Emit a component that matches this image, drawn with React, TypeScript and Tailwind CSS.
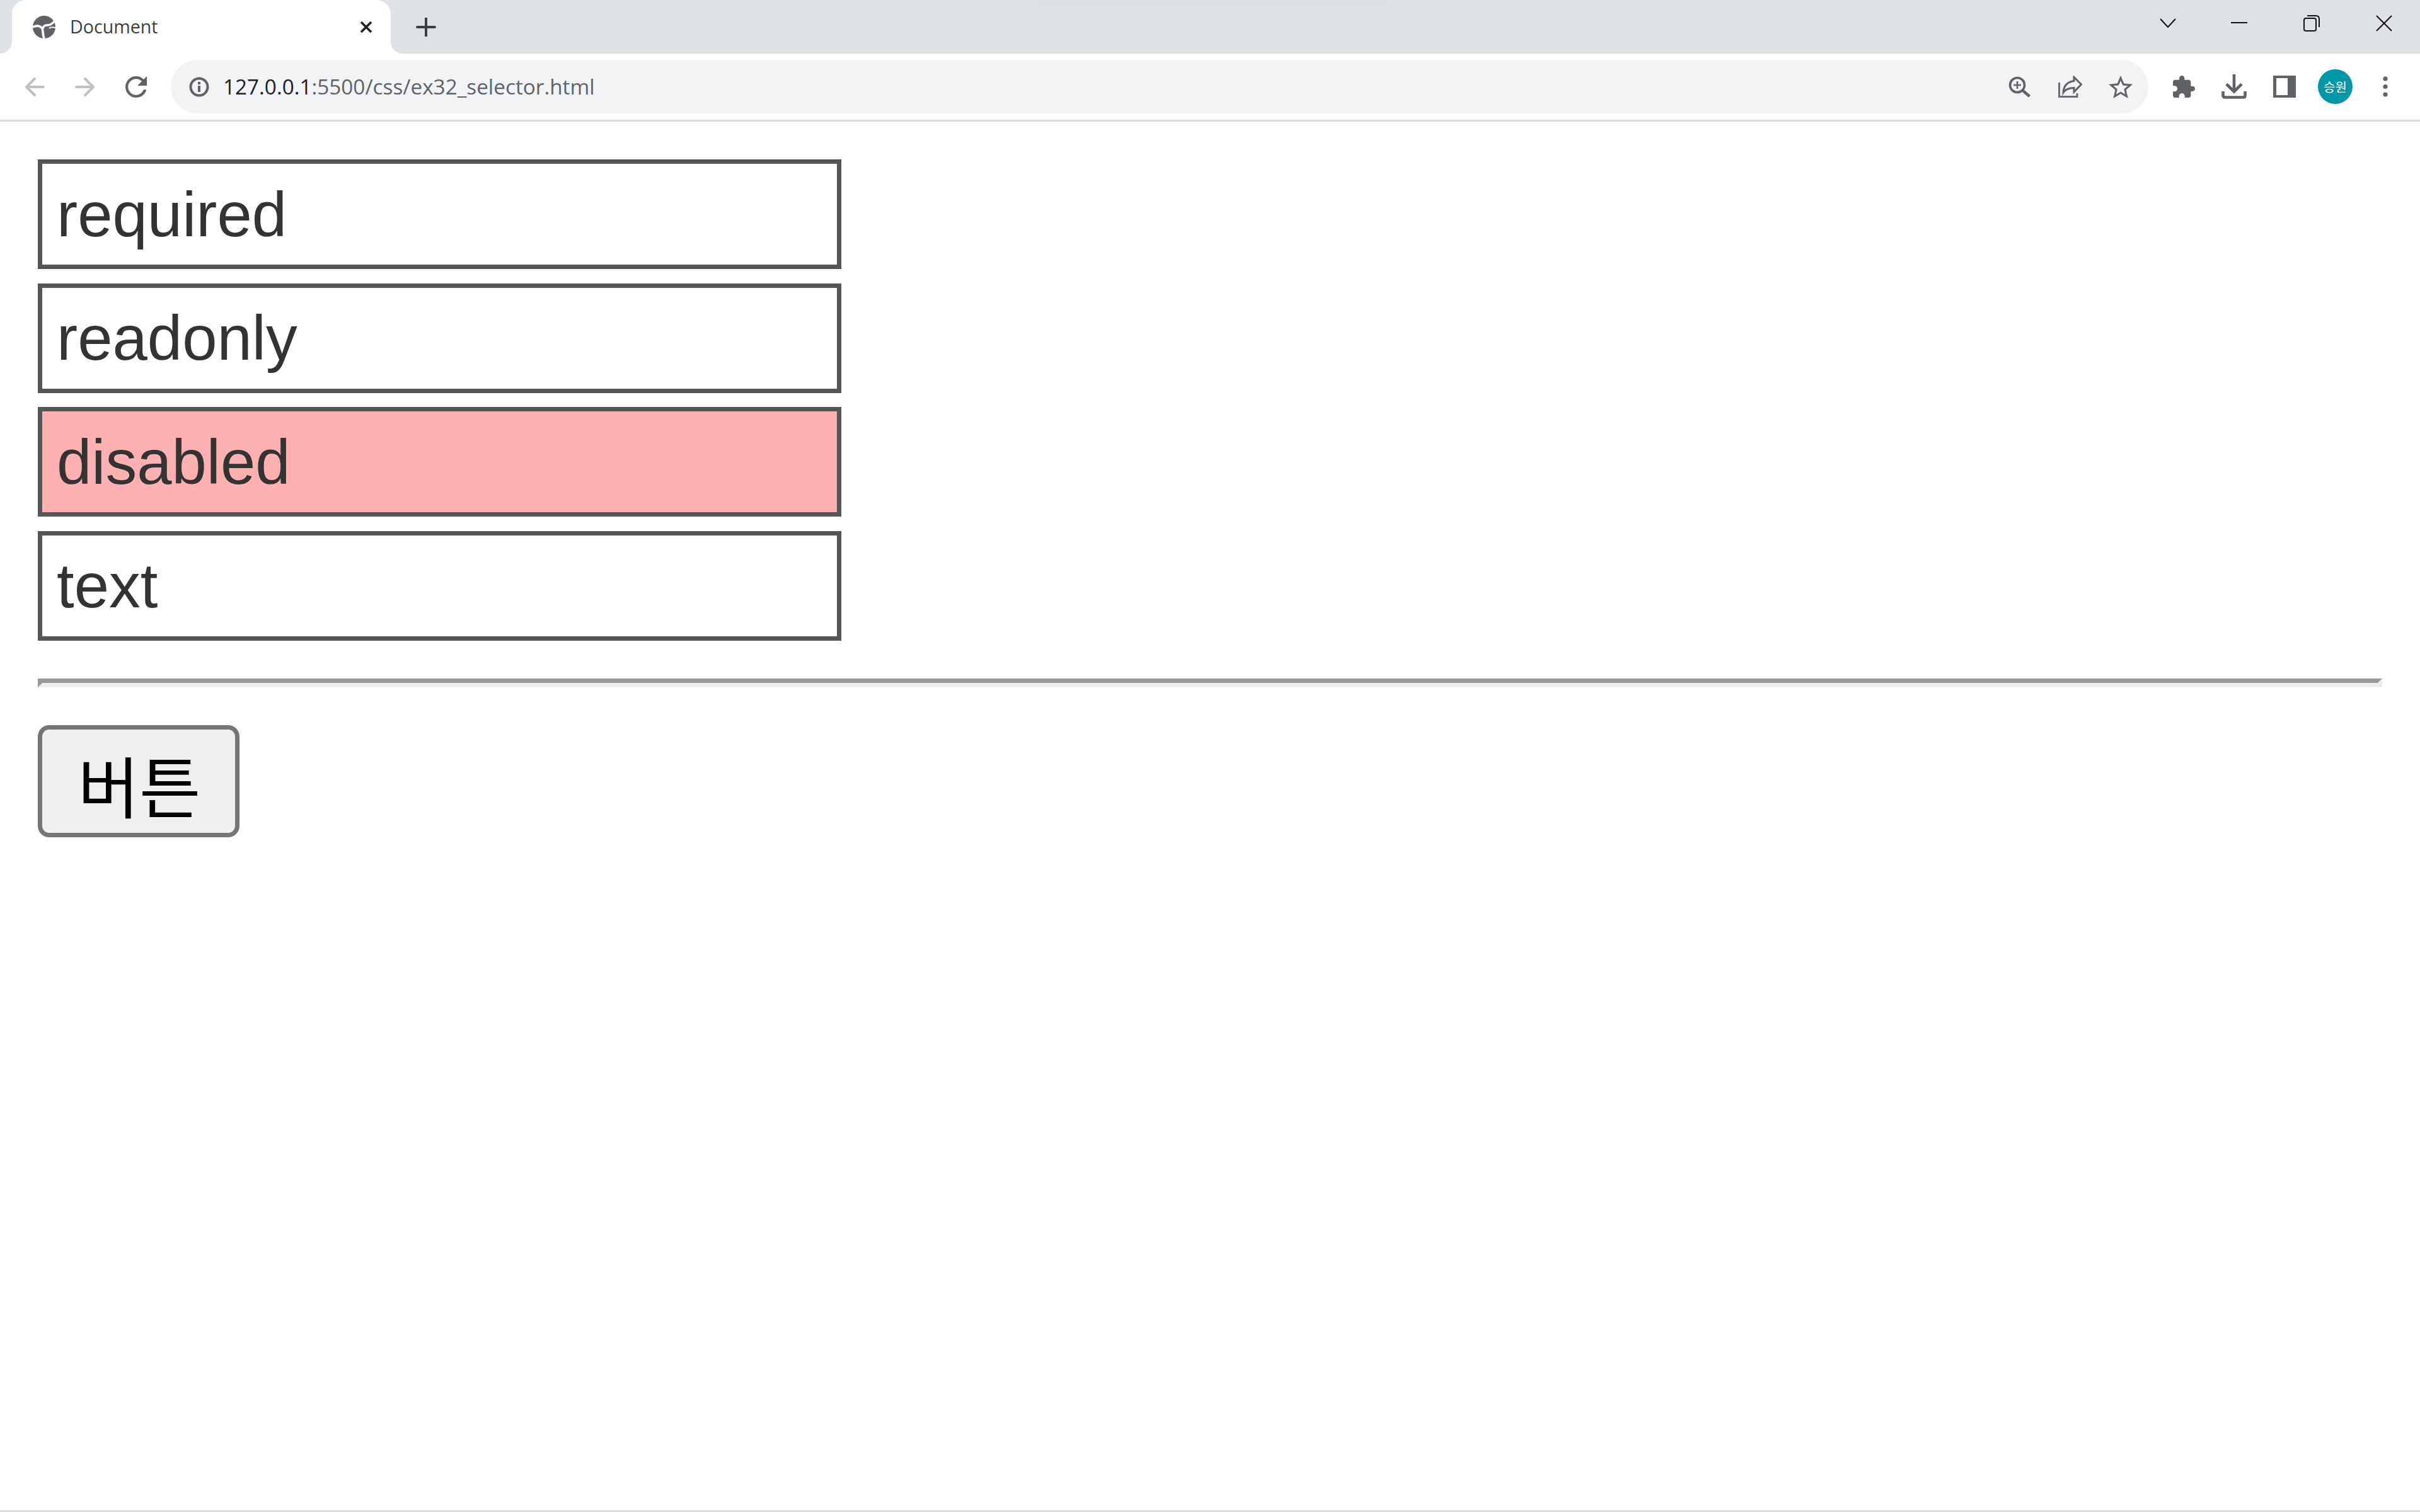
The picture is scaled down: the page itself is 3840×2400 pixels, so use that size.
import React from "react";

const sans = "font-['Open_Sans','Noto_Sans',sans-serif]";

function Field({ label, pink }: { label: string; pink?: boolean }) {
  return (
    <input
      readOnly
      value={label}
      className={`block w-[1275px] h-[174px] border-[7px] border-[#555] px-[23px] pt-[1px] text-[99.5px] text-[#333] outline-none font-['Liberation_Sans',Arial,sans-serif] ${pink ? "bg-[#ffb0b0]" : "bg-white"}`}
    />
  );
}

function Globe() {
  return (
    <svg width="36" height="36" viewBox="0 0 36 36" className="shrink-0">
      <circle cx="18" cy="18" r="18" fill="#5f6368" />
      <path d="M0 18C6 15 11 16 14 19C17 22 15 28 18 36" fill="none" stroke="#fff" strokeWidth="3.6" />
      <path d="M35 8C31 13 27 15 23 15C19 15 16 17 16 21" fill="none" stroke="#fff" strokeWidth="3.6" />
      <path d="M26 20C28 18 32 18 36 19" fill="none" stroke="#fff" strokeWidth="2" />
    </svg>
  );
}

function Arrow({ flip }: { flip?: boolean }) {
  return (
    <svg width="32" height="32" viewBox="0 0 32 32" className={`shrink-0 ${flip ? "rotate-180" : ""}`}>
      <path d="M30 16H3M16 3L3 16L16 29" fill="none" stroke="#bdc1c6" strokeWidth="4" strokeLinecap="round" strokeLinejoin="round" />
    </svg>
  );
}

export default function App() {
  return (
    <div className="relative flex h-[2400px] w-[3840px] flex-col overflow-hidden bg-white">
      {/* Title bar */}
      <div className="relative flex h-[85px] shrink-0 items-center bg-[#dee1e6]">
        <div className="pointer-events-none absolute left-[1648px] top-0 h-[16px] w-[552px] bg-gradient-to-b from-[#d8dbe0] to-[#dee1e6]" />
        <div className="relative ml-[19px] flex h-[85px] w-[601px] items-center rounded-t-[22px] bg-white pl-[33px]">
          <svg width="20" height="20" viewBox="0 0 20 20" className="absolute bottom-0 left-[-20px]">
            <path d="M20 0V20H0C12 20 20 12 20 0Z" fill="#fff" />
          </svg>
          <svg width="20" height="20" viewBox="0 0 20 20" className="absolute bottom-0 right-[-20px]">
            <path d="M0 0V20H20C8 20 0 12 0 0Z" fill="#fff" />
          </svg>
          <Globe />
          <span className={`ml-[23px] text-[28.6px] leading-none text-[#3c4043] ${sans}`}>Document</span>
          <svg width="20" height="20" viewBox="0 0 20 20" className="ml-auto mr-[29px] shrink-0">
            <path d="M2 2L18 18M18 2L2 18" stroke="#202124" strokeWidth="3.6" />
          </svg>
        </div>
        <svg width="32" height="30" viewBox="0 0 32 30" className="ml-[40px] shrink-0">
          <path d="M16 1V29M2 15H30" stroke="#3c4043" strokeWidth="4" strokeLinecap="round" />
        </svg>
        <svg width="26" height="16" viewBox="0 0 26 16" className="mb-[12px] ml-[2735px] shrink-0">
          <path d="M1 1L13 14L25 1" fill="none" stroke="#111" strokeWidth="2" />
        </svg>
        <svg width="26" height="26" viewBox="0 0 26 26" className="mb-[12px] ml-[87px] shrink-0">
          <path d="M0 12H26" stroke="#111" strokeWidth="2" />
        </svg>
        <svg width="26" height="26" viewBox="0 0 26 26" className="mb-[12px] ml-[89px] shrink-0">
          <rect x="1" y="5" width="19" height="20" rx="3" fill="none" stroke="#111" strokeWidth="2" />
          <path d="M6 1H20C23 1 25 3 25 6V19" fill="none" stroke="#111" strokeWidth="2" />
        </svg>
        <svg width="26" height="26" viewBox="0 0 26 26" className="mb-[12px] ml-[89px] shrink-0">
          <path d="M1 1L25 25M25 1L1 25" stroke="#111" strokeWidth="2" />
        </svg>
      </div>

      {/* Toolbar */}
      <div className="flex h-[108px] shrink-0 items-center border-b-[3px] border-[#dadcdf] bg-white pl-[39px]">
        <Arrow />
        <div className="ml-[48px]"><Arrow flip /></div>
        <svg width="34" height="34" viewBox="4 4 16 16" className="ml-[48px] shrink-0">
          <path d="M17.65 6.35C16.2 4.9 14.21 4 12 4c-4.42 0-7.99 3.58-7.99 8s3.57 8 7.99 8c3.73 0 6.84-2.55 7.73-6h-2.08c-.82 2.33-3.04 4-5.65 4-3.31 0-6-2.69-6-6s2.69-6 6-6c1.66 0 3.14.69 4.22 1.78L13 11h7V4l-2.35 2.35z" fill="#5f6368" />
        </svg>
        <div className="ml-[38px] flex h-[85px] w-[3138px] items-center rounded-full bg-[#f1f3f4] pl-[29px]">
          <svg width="32" height="32" viewBox="0 0 32 32" className="shrink-0">
            <circle cx="16" cy="16" r="13.5" fill="none" stroke="#5f6368" strokeWidth="4" />
            <rect x="14" y="14" width="4" height="10" fill="#5f6368" />
            <rect x="14" y="8" width="4" height="4" fill="#5f6368" />
          </svg>
          <span className={`ml-[22px] whitespace-nowrap text-[33.3px] leading-none text-[#5f6368] ${sans}`}>
            <span className="text-[#202124]">127.0.0.1</span>:5500/css/ex32_selector.html
          </span>
          <svg width="36" height="34" viewBox="0 0 36 34" className="ml-auto shrink-0">
            <circle cx="14" cy="14" r="11.5" fill="none" stroke="#5f6368" strokeWidth="3.6" />
            <path d="M14 8V20M8 14H20" stroke="#5f6368" strokeWidth="2.6" />
            <path d="M22.5 22.5L33.5 32" stroke="#5f6368" strokeWidth="4.5" />
          </svg>
          <svg width="38" height="36" viewBox="0 0 38 36" className="ml-[43px] shrink-0">
            <path d="M1.5 11V33.5H30V28" fill="none" stroke="#6b6f74" strokeWidth="3" />
            <path d="M25 2.5L36.5 14L25 26V19.5C18 19.5 12 21 8 27C8.5 17 14 10 25 8.5Z" fill="none" stroke="#5f6368" strokeWidth="3" strokeLinejoin="miter" />
          </svg>
          <svg width="38" height="36" viewBox="2 2 20 19" className="ml-[42px] mr-[25px] shrink-0">
            <path d="M22 9.24l-7.19-.62L12 2 9.19 8.63 2 9.24l5.46 4.73L5.82 21 12 17.27 18.18 21l-1.63-7.03L22 9.24zM12 15.4l-3.76 2.27 1-4.28-3.32-2.88 4.38-.38L12 6.1l1.71 4.04 4.38.38-3.32 2.88 1 4.28L12 15.4z" fill="#5f6368" />
          </svg>
        </div>
        <svg width="35" height="35" viewBox="2 1 21 21" className="ml-[39px] shrink-0">
          <path d="M20.5 11H19V7c0-1.1-.9-2-2-2h-4V3.5C13 2.12 11.88 1 10.5 1S8 2.12 8 3.5V5H4c-1.1 0-1.99.9-1.99 2v3.8H3.5c1.49 0 2.7 1.21 2.7 2.7s-1.21 2.7-2.7 2.7H2V20c0 1.1.9 2 2 2h3.8v-1.5c0-1.49 1.21-2.7 2.7-2.7 1.49 0 2.7 1.21 2.7 2.7V22H17c1.1 0 2-.9 2-2v-4h1.5c1.38 0 2.5-1.12 2.5-2.5S21.88 11 20.5 11z" fill="#5f6368" />
        </svg>
        <svg width="40" height="39" viewBox="0 0 40 39" className="ml-[42px] shrink-0">
          <path d="M20 0V27M8 15.5L20 27.5L32 15.5" fill="none" stroke="#5f6368" strokeWidth="4.6" />
          <path d="M2.5 27V33.5Q2.5 36.5 5.5 36.5H34.5Q37.5 36.5 37.5 33.5V27" fill="none" stroke="#5f6368" strokeWidth="4.6" />
        </svg>
        <svg width="36" height="35" viewBox="0 0 36 35" className="ml-[42px] shrink-0">
          <path d="M0 0H36V35H0ZM5 4V31H23V4Z" fill="#5f6368" fillRule="evenodd" />
        </svg>
        <div className="ml-[35px] flex h-[55px] w-[55px] shrink-0 items-center justify-center rounded-full bg-[#0097a7] text-[20px] leading-none text-white font-['Noto_Sans_CJK_KR',sans-serif]">
          승원
        </div>
        <svg width="8" height="33" viewBox="0 0 8 33" className="ml-[48px] shrink-0">
          <circle cx="4" cy="4" r="3.6" fill="#5f6368" />
          <circle cx="4" cy="16.5" r="3.6" fill="#5f6368" />
          <circle cx="4" cy="29" r="3.6" fill="#5f6368" />
        </svg>
      </div>

      {/* Page */}
      <div className="flex flex-1 flex-col border-b-[3px] border-[#dddddd] px-[60px] pt-[60px]">
        <div className="flex flex-col gap-[22.67px]">
          <Field label="required" />
          <Field label="readonly" />
          <Field label="disabled" pink />
          <Field label="text" />
        </div>
        <hr className="mt-[60px] h-[14px] border-[7px] border-t-[#9a9a9a] border-l-[#9a9a9a] border-r-[#eeeeee] border-b-[#eeeeee]" />
        <button className="mt-[60px] flex h-[178px] w-[320px] items-center justify-center rounded-[18px] border-[7px] border-[#767676] bg-[#efefef] pl-[2px] pt-[8px] text-[106px] leading-none text-black font-['Noto_Sans_CJK_KR',sans-serif]">
          버튼
        </button>
      </div>
    </div>
  );
}
